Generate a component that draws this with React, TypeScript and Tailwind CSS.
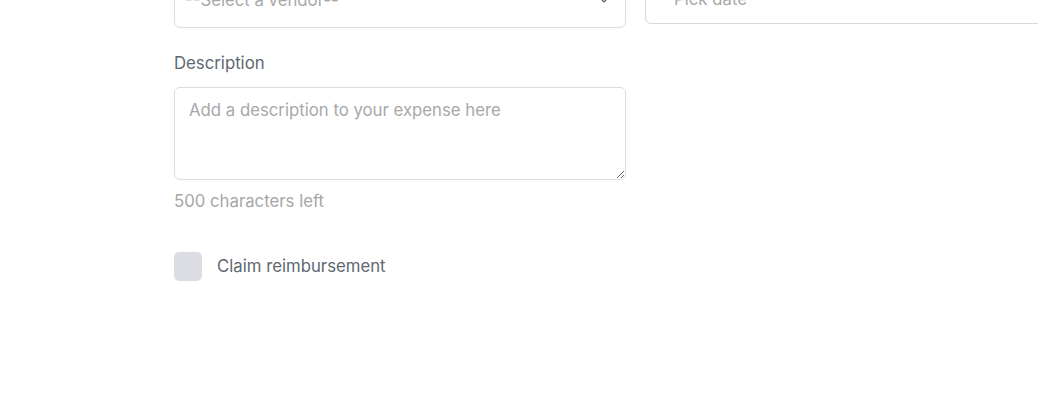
import React from "react";

export default function App() {
  return (
    <div
      className="h-[413px] w-[1038px] overflow-hidden bg-white"
      style={{ fontFamily: "Inter, 'Noto Sans', sans-serif" }}
    >
      <div className="pl-[174px]">
        <div className="-mt-[32px] grid grid-cols-[452px_452px] items-start gap-[19px]">
          <div className="flex h-[60px] items-center justify-between rounded-[6px] border border-[#dcdce4] pl-[10px] pr-[10px]">
            <span className="mt-[3px] text-[16.75px] leading-6 text-[#a8a8a8]">--Select a vendor--</span>
            <svg width="10" height="6" viewBox="0 0 10 6" className="mr-[6px] mt-[3px]">
              <path d="M1 1l4 4 4-4" fill="none" stroke="#555" strokeWidth="1.2" />
            </svg>
          </div>
          <div className="mt-[3px] flex h-[53px] items-center rounded-[6px] border border-[#d8d8dc] pl-[28px]">
            <span className="mt-[3px] text-[16.75px] leading-6 text-[#a8a8a8]">Pick date</span>
          </div>
        </div>

        <div className="mt-[23px] w-[452px]">
          <div className="text-[16.75px] leading-6 text-[#5e6771]">Description</div>
          <textarea
            className="mt-[12px] block h-[93px] w-[452px] rounded-[6px] border border-[#dcdce4] px-[14px] pb-[10px] pt-[11px] text-[16.75px] leading-[22px] text-[#333] outline-none placeholder:text-[#a8a8a8]"
            placeholder="Add a description to your expense here"
          />
          <div className="mt-[9px] text-[16.75px] leading-6 text-[#a6a6a6]">500 characters left</div>
          <div className="mt-[39px] flex items-center gap-[15px]">
            <div className="h-[29px] w-[28px] rounded-[5px] bg-[#dcdce5]" />
            <span className="-mt-[1px] text-[16.75px] leading-6 text-[#5e6771]">Claim reimbursement</span>
          </div>
        </div>
      </div>
    </div>
  );
}
